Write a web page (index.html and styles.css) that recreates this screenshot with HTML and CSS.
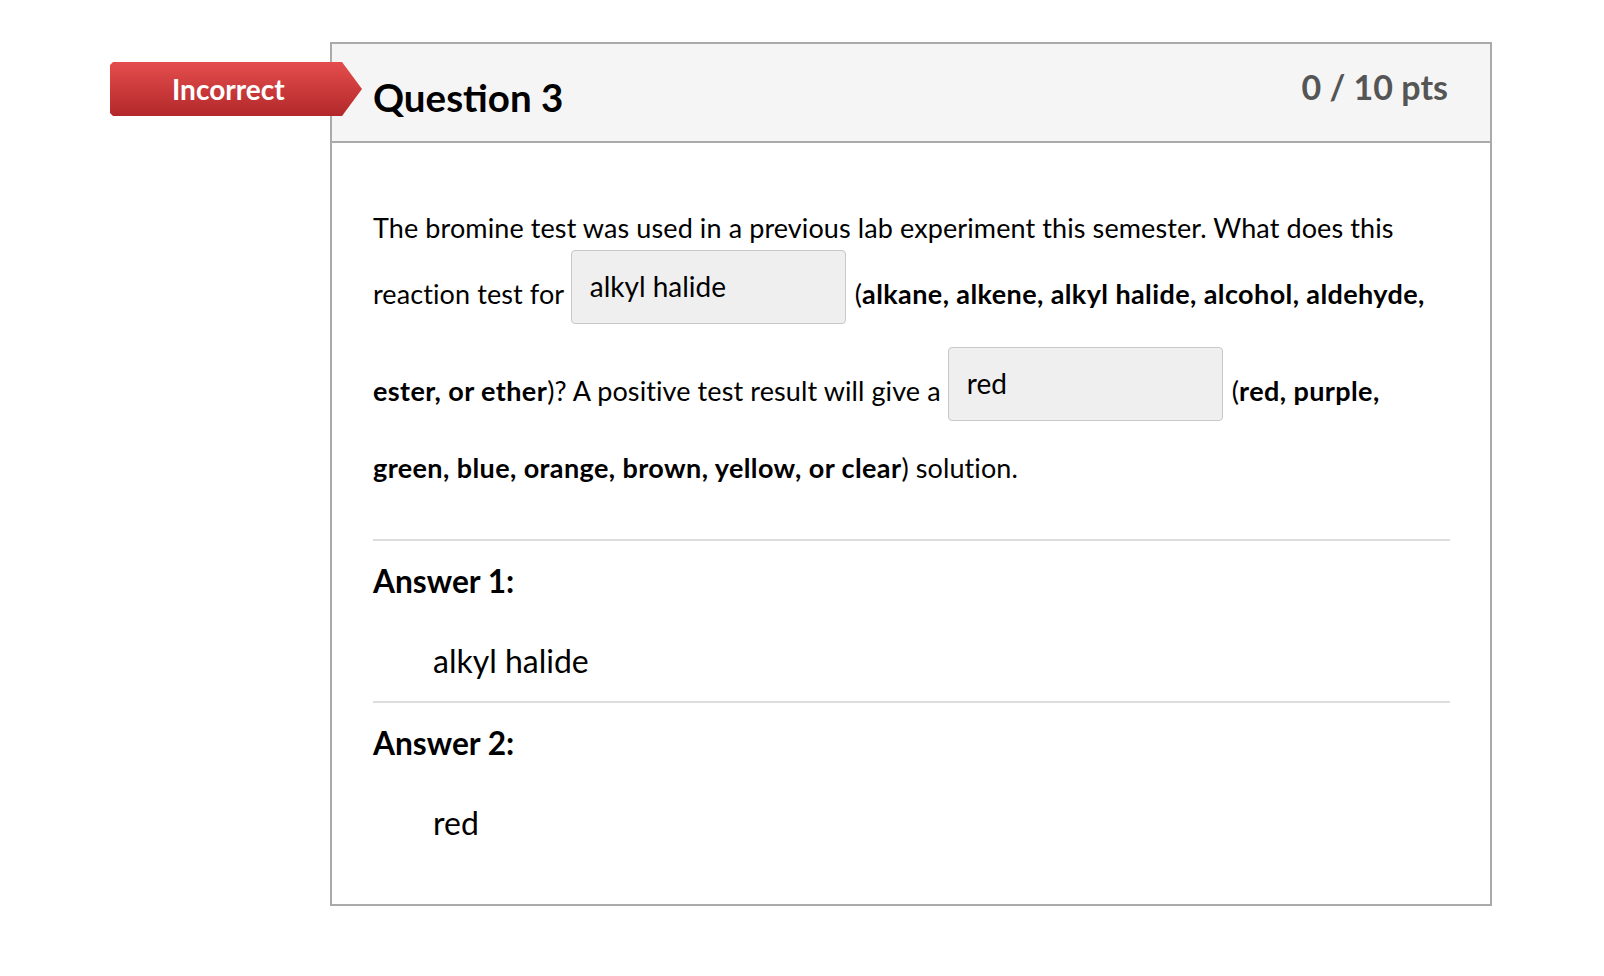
FILE: index.html
```html
<!DOCTYPE html>
<html>
<head>
<meta charset="utf-8">
<link rel="stylesheet" href="styles.css">
</head>
<body>
<div class="page">
  <div class="badge-col">
    <div class="badge">Incorrect</div>
  </div>
  <div class="card">
    <div class="card-header">
      <h2 class="q-title">Question 3</h2>
      <div class="pts">0 / 10 pts</div>
    </div>
    <div class="card-body">
      <p class="q-text">The bromine test was used in a previous lab experiment this semester. What does this reaction test for <span class="blank">alkyl halide</span> (<b>alkane, alkene, alkyl halide, alcohol, aldehyde, ester, or ether</b>)? A positive test result will give a <span class="blank">red</span> (<b>red, purple, green, blue, orange, brown, yellow, or clear</b>) solution.</p>
      <div class="answer">
        <div class="ans-label">Answer 1:</div>
        <div class="ans-value">alkyl halide</div>
      </div>
      <div class="answer">
        <div class="ans-label">Answer 2:</div>
        <div class="ans-value">red</div>
      </div>
    </div>
  </div>
</div>
</body>
</html>
```
FILE: styles.css
```css
html, body { margin: 0; padding: 0; background: #fff; }
body { font-family: Lato, "Open Sans", sans-serif; color: #000; }
.page { display: flex; align-items: flex-start; padding: 42px 0 0 110px; }
.badge-col { width: 220px; flex: none; padding-top: 20px; position: relative; z-index: 2; }
.badge {
  width: 252px; height: 54px; box-sizing: border-box;
  background: linear-gradient(#e54d4d, #b2282a);
  color: #fff; font-weight: 700; font-size: 28px; line-height: 54px;
  padding-left: 62px;
  clip-path: polygon(0 3px, 3px 0, 232px 0, 252px 27px, 232px 54px, 3px 54px, 0 51px);
}
.card { width: 1162px; flex: none; border: 2px solid #aaa; box-sizing: border-box; background: #fff; }
.card-header {
  background: #f5f5f5; border-bottom: 2px solid #aaa; height: 99px; box-sizing: border-box;
  display: flex; justify-content: space-between; align-items: flex-start; padding: 0 42px 0 41px;
}
.q-title { margin: 0; font-size: 38.5px; font-weight: 700; padding-top: 30px; line-height: 46px; }
.pts { font-size: 34px; font-weight: 700; color: #555; padding-top: 23px; line-height: 40px; }
.card-body { padding: 62px 40px 41px 41px; }
.q-text { margin: 0; font-size: 27px; letter-spacing: 0.1px; line-height: 46px; padding-bottom: 48px; border-bottom: 2px solid #ddd; }
.q-text b { font-weight: 700; letter-spacing: 0.4px; }
.blank {
  display: inline-block; width: 275px; height: 74px; box-sizing: border-box;
  background: #efefef; border: 1px solid #c8c8c8; border-radius: 4px;
  padding: 15px 18px 0; font-size: 28px; line-height: 40px; letter-spacing: 0;
  vertical-align: 7px; margin: -1px 2px 24px 0;
}
.answer { border-bottom: 2px solid #ddd; padding-bottom: 20px; }
.answer:last-child { border-bottom: none; }
.ans-label { font-size: 31.7px; font-weight: 700; padding-top: 20px; line-height: 40px; }
.ans-value { font-size: 32px; padding: 40px 0 0 60px; line-height: 40px; }
```
